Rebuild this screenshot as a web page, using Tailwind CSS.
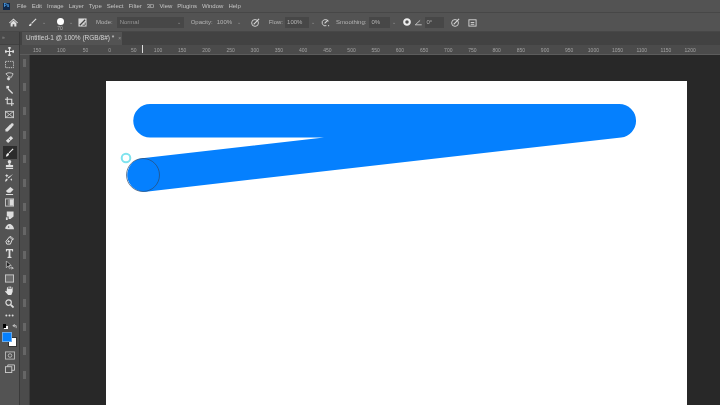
<!DOCTYPE html>
<html>
<head>
<meta charset="utf-8">
<script src="https://cdn.jsdelivr.net/npm/@tailwindcss/browser@4"></script>
</head>
<body class="m-0">
<div class="w-[720px] h-[405px] overflow-hidden flex flex-col bg-[#282828] font-['Liberation_Sans',Arial,sans-serif] text-[#c4c4c4]">
  <!-- menu bar -->
  <div class="h-[12px] shrink-0 bg-[#535353] flex items-center text-[6px] leading-none blur-[0.4px]">
    <div class="w-[7px] h-[7px] ml-[3px] bg-[#10284a] text-[#4fa8f5] text-[4.5px] font-bold flex items-center justify-center">Ps</div>
    <span class="ml-[7px]">File</span><span class="ml-[5px]">Edit</span><span class="ml-[5px]">Image</span><span class="ml-[5px]">Layer</span><span class="ml-[5px]">Type</span><span class="ml-[5px]">Select</span><span class="ml-[5px]">Filter</span><span class="ml-[5px]">3D</span><span class="ml-[5px]">View</span><span class="ml-[5px]">Plugins</span><span class="ml-[5px]">Window</span><span class="ml-[5px]">Help</span>
  </div>
  <!-- options bar -->
  <div class="h-[20px] shrink-0 bg-[#535353] border-t border-b border-[#474747] flex items-center text-[6px] leading-none text-[#b4b4b4] blur-[0.4px]">
    <svg class="ml-[9px] w-[9px] h-[9px]" viewBox="0 0 10 10" fill="#e0e0e0"><path d="M5 .5 0 5.2l.8.7L5 2l4.2 3.9.8-.7zM1.8 5.8V9.5h2.3V7h1.8v2.5h2.3V5.8L5 2.9z"/></svg>
    <svg class="ml-[10px] w-[9px] h-[9px]" viewBox="0 0 10 10" fill="none" stroke="#e0e0e0"><path d="M9 1 4 6" stroke-width="1.2"/><path d="M1 9c.5-2 1-3 2.5-3L4 7.5C3.500 9 2 9 1 9z" fill="#e0e0e0" stroke="none"/></svg>
    <span class="ml-[5px] text-[5px] text-[#999]">⌄</span>
    <div class="ml-[9px] w-[10px] flex flex-col items-center">
      <div class="w-[7px] h-[7px] rounded-full bg-white"></div>
      <span class="text-[5px] mt-[1px] -mb-[4px]">70</span>
    </div>
    <span class="ml-[4px] text-[5px] text-[#999]">⌄</span>
    <svg class="ml-[5px] w-[9px] h-[9px]" viewBox="0 0 10 10"><rect x=".5" y=".5" width="9" height="9" fill="#d8d8d8"/><path d="M2 8 8 2" stroke="#444" stroke-width="1.4"/><path d="M5 8h3V5" stroke="#444" fill="none"/></svg>
    <span class="ml-[9px]">Mode:</span>
    <div class="ml-[4px] w-[67px] h-[11px] bg-[#474747] flex items-center justify-between px-[3px] text-[#999]"><span>Normal</span><span class="text-[5px]">⌄</span></div>
    <span class="ml-[7px]">Opacity:</span>
    <span class="ml-[4px] w-[20px]">100%</span>
    <span class="text-[5px] text-[#999]">⌄</span>
    <svg class="ml-[10px] w-[9px] h-[9px]" viewBox="0 0 10 10" fill="none" stroke="#d8d8d8"><circle cx="4.500" cy="5.500" r="3.800"/><path d="M3 7 9 1" stroke-width="1.300"/></svg>
    <span class="ml-[9px]">Flow:</span>
    <div class="ml-[2px] w-[24px] h-[11px] bg-[#474747] flex items-center pl-[2px]">100%</div>
    <span class="ml-[2px] text-[5px] text-[#999]">⌄</span>
    <svg class="ml-[6px] w-[9px] h-[9px]" viewBox="0 0 10 10" fill="none" stroke="#d8d8d8"><path d="M8 4a3.500 3.500 0 1 0-2 4.500"/><path d="M4 6 8 2" stroke-width="1.300"/><path d="M8 8.500h1" stroke-width="1.300"/></svg>
    <span class="ml-[6px]">Smoothing:</span>
    <div class="ml-[3px] w-[21px] h-[11px] bg-[#474747] flex items-center pl-[2px]">0%</div>
    <span class="ml-[2px] text-[5px] text-[#999]">⌄</span>
    <svg class="ml-[7px] w-[8px] h-[8px]" viewBox="0 0 10 10"><circle cx="5" cy="5" r="3.500" fill="none" stroke="#eee" stroke-width="2.600"/></svg>
    <svg class="ml-[3px] w-[9px] h-[8px]" viewBox="0 0 10 10" fill="none" stroke="#d8d8d8"><path d="M1 8.500h8M1 8.500 7 3"/></svg>
    <div class="ml-[2px] w-[19px] h-[11px] bg-[#474747] flex items-center pl-[1px]">0°</div>
    <svg class="ml-[7px] w-[9px] h-[9px]" viewBox="0 0 10 10" fill="none" stroke="#d8d8d8"><circle cx="4.500" cy="5.500" r="3.800"/><path d="M3 7 9 1" stroke-width="1.300"/></svg>
    <svg class="ml-[8px] w-[9px] h-[9px]" viewBox="0 0 10 10" fill="none" stroke="#d8d8d8"><rect x="1" y="2" width="8" height="7"/><path d="M3 5h4M3 7h4"/></svg>
  </div>
  <div class="flex-1 flex min-h-0">
    <!-- tools -->
    <div class="w-[19px] shrink-0 bg-[#535353] flex flex-col items-center blur-[0.4px]">
      <div class="h-[13px] w-full bg-[#4a4a4a] border-b border-[#414141] text-[5px] text-[#999] pl-[2px] leading-[10px]">»</div>
      <div class="flex flex-col items-center gap-[3.6px] mt-[2px]">
        <svg class="w-[9px] h-[9px]" viewBox="0 0 10 10" fill="none" stroke="#ddd" stroke-width="1.200"><path d="M5 0v10M0 5h10M3.500 1.500 5 0l1.500 1.500M3.500 8.500 5 10l1.500-1.500M1.500 3.500 0 5l1.500 1.500M8.500 3.500 10 5 8.500 6.500"/></svg>
        <svg class="w-[9px] h-[9px]" viewBox="0 0 10 10" fill="none" stroke="#ccc" stroke-dasharray="1.500 1"><rect x=".5" y="1.500" width="9" height="7"/></svg>
        <svg class="w-[9px] h-[9px]" viewBox="0 0 10 10" fill="none" stroke="#ccc"><path d="M1 2c3-2 6-1 8 0L7 6 4 5z"/><circle cx="4" cy="7.500" r="1.300" fill="#ddd"/></svg>
        <svg class="w-[9px] h-[9px]" viewBox="0 0 10 10" fill="#ddd"><path d="m4 4 5 5-1 1-5-5z"/><rect x="1.500" y="1" width="3" height="3"/></svg>
        <svg class="w-[9px] h-[9px]" viewBox="0 0 10 10" fill="none" stroke="#ddd" stroke-width="1.200"><path d="M2.500 0v7.500H10M0 2.500h7.500V10"/></svg>
        <svg class="w-[9px] h-[9px]" viewBox="0 0 10 10" fill="none" stroke="#ccc"><rect x=".5" y="1.500" width="9" height="7"/><path d="m.5 1.500 9 7M9.500 1.500l-9 7"/></svg>
        <svg class="w-[9px] h-[9px]" viewBox="0 0 10 10" fill="#ddd"><path d="M6 1.500 8.500 4 3 9.500H.5V7z"/><circle cx="8" cy="2" r="1.600"/></svg>
        <svg class="w-[9px] h-[9px]" viewBox="0 0 10 10"><path d="m1 6.500 5.500-5.500 2.500 2.500L3.500 9z" fill="#ddd"/><path d="m4 4 2 2" stroke="#666"/></svg>
        <div class="w-[14px] h-[13px] -my-[2px] bg-[#2c2c2c] flex items-center justify-center"><svg class="w-[9px] h-[9px]" viewBox="0 0 10 10"><path d="M9 1 4.500 5.500" stroke="#eee" stroke-width="1.200"/><path d="M1 9.500c.5-2.500 1.200-4 3-4l.5 1.500C4 9 2.500 9.500 1 9.500z" fill="#eee"/></svg></div>
        <svg class="w-[9px] h-[9px]" viewBox="0 0 10 10" fill="#ddd"><circle cx="5" cy="2" r="2"/><path d="M4 3.500h2v2H4zM1 5.500h8V8H1zM1 9h8v1H1z"/></svg>
        <svg class="w-[9px] h-[9px]" viewBox="0 0 10 10" fill="#ddd"><path d="M9 1 4 6l-1-1z"/><path d="M0 9.500c.5-2.500 1-3.500 2.500-3.500L3 7c-.5 2-1.500 2.500-3 2.500zM7 6l1 1-1 2-1-2zM2 1l.7 1.300L4 3l-1.300.7L2 5l-.7-1.300L0 3l1.300-.7z"/></svg>
        <svg class="w-[9px] h-[9px]" viewBox="0 0 10 10" fill="#ddd"><path d="M6 1 9.500 4 6 7.500H3L1 5.500zM1 9h8v1H1z"/></svg>
        <svg class="w-[9px] h-[9px]" viewBox="0 0 10 10"><rect x=".5" y="1" width="9" height="8" fill="none" stroke="#ccc"/><rect x="5" y="1.500" width="4" height="7" fill="#ddd"/><rect x="3" y="1.500" width="2" height="7" fill="#888"/></svg>
        <svg class="w-[9px] h-[9px]" viewBox="0 0 10 10" fill="#ddd"><path d="M2 .5h7.500V6L6 9H4V6H2z"/><path d="M1 7h2v3H1z"/></svg>
        <svg class="w-[9px] h-[9px]" viewBox="0 0 10 10" fill="#ddd"><path d="M0 6c1-3 3-5 5-5 2.500 0 5 3 5 6H3C2 7 1 6.500 0 6z"/><circle cx="4" cy="4.500" r=".9" fill="#555"/></svg>
        <svg class="w-[9px] h-[9px]" viewBox="0 0 10 10" fill="none" stroke="#ddd" stroke-width="1.100"><path d="M1 6 5 1l3 3-2 5H2zM5 1l1.500-.5 3 3L8 4"/><circle cx="4" cy="6" r=".8" fill="#ddd"/></svg>
        <svg class="w-[9px] h-[9px]" viewBox="0 0 10 10" fill="#ddd"><path d="M1 0h8v2.800H8L7.500 1.500H6V8.500l1.200.5V10H2.800V9L4 8.500v-7H2.500L2 2.800H1z"/></svg>
        <svg class="w-[9px] h-[9px]" viewBox="0 0 10 10"><path d="M1.500 0v7.500l2-2 1.500 3 1-.5-1.500-3H7z" fill="#222" stroke="#ddd" stroke-width=".7"/><path d="M7 6l3 2-2 .5L7.500 10z" fill="#ddd"/></svg>
        <svg class="w-[9px] h-[9px]" viewBox="0 0 10 10"><rect x=".5" y="1" width="9" height="8" fill="#6c6c6c" stroke="#ccc"/></svg>
        <svg class="w-[9px] h-[9px]" viewBox="0 0 10 10" fill="#e4e4e4"><path d="M2 3h6.500v3.500L7 10H3.500L0 6l1 -.8L2 6zM2.200 1.500h1v2h-1zM4 .5h1v2H4zM5.800.5h1v2h-1zM7.500 1.500h1v2h-1z"/></svg>
        <svg class="w-[9px] h-[9px]" viewBox="0 0 10 10" fill="none" stroke="#ddd" stroke-width="1.300"><circle cx="4" cy="4" r="3"/><path d="m6.500 6.500 3 3" stroke-width="2"/></svg>
        <svg class="w-[9px] h-[9px]" viewBox="0 0 10 10" fill="#ddd"><circle cx="1.500" cy="5" r="1.100"/><circle cx="5" cy="5" r="1.100"/><circle cx="8.500" cy="5" r="1.100"/></svg>
        <div class="w-[14px] h-[7px] -mt-[1px] flex justify-between items-center">
          <div class="relative w-[5px] h-[5px]"><div class="absolute right-0 bottom-0 w-[3.500px] h-[3.500px] bg-white"></div><div class="absolute left-0 top-0 w-[3.500px] h-[3.500px] bg-black"></div></div>
          <svg class="w-[5px] h-[5px]" viewBox="0 0 6 6" fill="none" stroke="#ccc"><path d="M1 2h4v3M3.500 .5 1 2l2.500 1.500"/></svg>
        </div>
        <div class="relative w-[15px] h-[15px] -mt-[2px]">
          <div class="absolute left-[5.500px] top-[5.500px] w-[9.500px] h-[9.500px] bg-white border border-[#333]"></div>
          <div class="absolute left-0 top-0 w-[10px] h-[10px] bg-[#0580fe] border border-[#cfcfcf]/50"></div>
        </div>
        <svg class="w-[10px] h-[9px] mt-[1px]" viewBox="0 0 11 10" fill="none" stroke="#bbb"><rect x=".5" y="1" width="10" height="8"/><circle cx="5.500" cy="5" r="2"/></svg>
        <svg class="w-[10px] h-[9px]" viewBox="0 0 11 10" fill="none" stroke="#ccc"><rect x=".5" y="3" width="7" height="6.500"/><path d="M3 3V1h7.500v6h-3"/></svg>
      </div>
    </div>
    <div class="w-[1px] shrink-0 bg-[#3a3a3a]"></div>
    <div class="flex-1 flex flex-col min-w-0">
      <!-- tab row -->
      <div class="h-[13px] shrink-0 bg-[#424242] flex blur-[0.4px]">
        <div class="ml-[2px] w-[100px] bg-[#535353] flex items-center pl-[4px] text-[6.500px] leading-none text-[#d4d4d4] whitespace-nowrap">Untitled-1 @ 100% (RGB/8#) *<span class="ml-[4px] text-[#999] text-[5px]">×</span></div>
      </div>
      <!-- ruler row -->
      <div class="h-[10px] shrink-0 bg-[#4b4b4b] border-b border-[#5c5c5c] flex items-end pb-[1px] text-[5px] leading-none text-[#a2a2a2] pl-[5px] relative blur-[0.4px]">
        <span class="w-[24.200px] text-center">150</span><span class="w-[24.200px] text-center">100</span><span class="w-[24.200px] text-center">50</span><span class="w-[24.200px] text-center">0</span><span class="w-[24.200px] text-center">50</span><span class="w-[24.200px] text-center">100</span><span class="w-[24.200px] text-center">150</span><span class="w-[24.200px] text-center">200</span><span class="w-[24.200px] text-center">250</span><span class="w-[24.200px] text-center">300</span><span class="w-[24.200px] text-center">350</span><span class="w-[24.200px] text-center">400</span><span class="w-[24.200px] text-center">450</span><span class="w-[24.200px] text-center">500</span><span class="w-[24.200px] text-center">550</span><span class="w-[24.200px] text-center">600</span><span class="w-[24.200px] text-center">650</span><span class="w-[24.200px] text-center">700</span><span class="w-[24.200px] text-center">750</span><span class="w-[24.200px] text-center">800</span><span class="w-[24.200px] text-center">850</span><span class="w-[24.200px] text-center">900</span><span class="w-[24.200px] text-center">950</span><span class="w-[24.200px] text-center">1000</span><span class="w-[24.200px] text-center">1050</span><span class="w-[24.200px] text-center">1100</span><span class="w-[24.200px] text-center">1150</span><span class="w-[24.200px] text-center">1200</span>
        <div class="absolute left-[122px] top-0 w-[1px] h-[8px] bg-[#ddd]"></div>
      </div>
      <div class="flex-1 flex min-h-0">
        <!-- vertical ruler -->
        <div class="w-[10px] shrink-0 bg-[#4b4b4b] border-r border-[#3c3c3c] flex flex-col items-center gap-[16px] pt-[4px] blur-[0.4px]">
          <div class="w-[3px] h-[8px] bg-[#666]"></div><div class="w-[3px] h-[8px] bg-[#666]"></div><div class="w-[3px] h-[8px] bg-[#666]"></div><div class="w-[3px] h-[8px] bg-[#666]"></div><div class="w-[3px] h-[8px] bg-[#666]"></div><div class="w-[3px] h-[8px] bg-[#666]"></div><div class="w-[3px] h-[8px] bg-[#666]"></div><div class="w-[3px] h-[8px] bg-[#666]"></div><div class="w-[3px] h-[8px] bg-[#666]"></div><div class="w-[3px] h-[8px] bg-[#666]"></div><div class="w-[3px] h-[8px] bg-[#666]"></div><div class="w-[3px] h-[8px] bg-[#666]"></div><div class="w-[3px] h-[8px] bg-[#666]"></div><div class="w-[3px] h-[8px] bg-[#666]"></div>
        </div>
        <!-- canvas -->
        <div class="flex-1 pl-[76px] pt-[26px] overflow-hidden">
          <div class="relative w-[581px] h-[330px] bg-white">
            <svg class="absolute left-[-106px] top-[-81px] w-[720px] h-[405px] overflow-visible" viewBox="0 0 720 405" fill="none">
              <path d="M150 120.750H619.300L144 175" stroke="#0580fe" stroke-width="33.500" stroke-linecap="round" stroke-linejoin="round"/>
              <circle cx="143" cy="175" r="16.500" stroke="#2c4a6e" stroke-width=".7"/>
              <circle cx="126" cy="158" r="4.300" stroke="#7fe3ee" stroke-width="2"/>
            </svg>
          </div>
        </div>
      </div>
    </div>
  </div>
</div>
</body>
</html>
